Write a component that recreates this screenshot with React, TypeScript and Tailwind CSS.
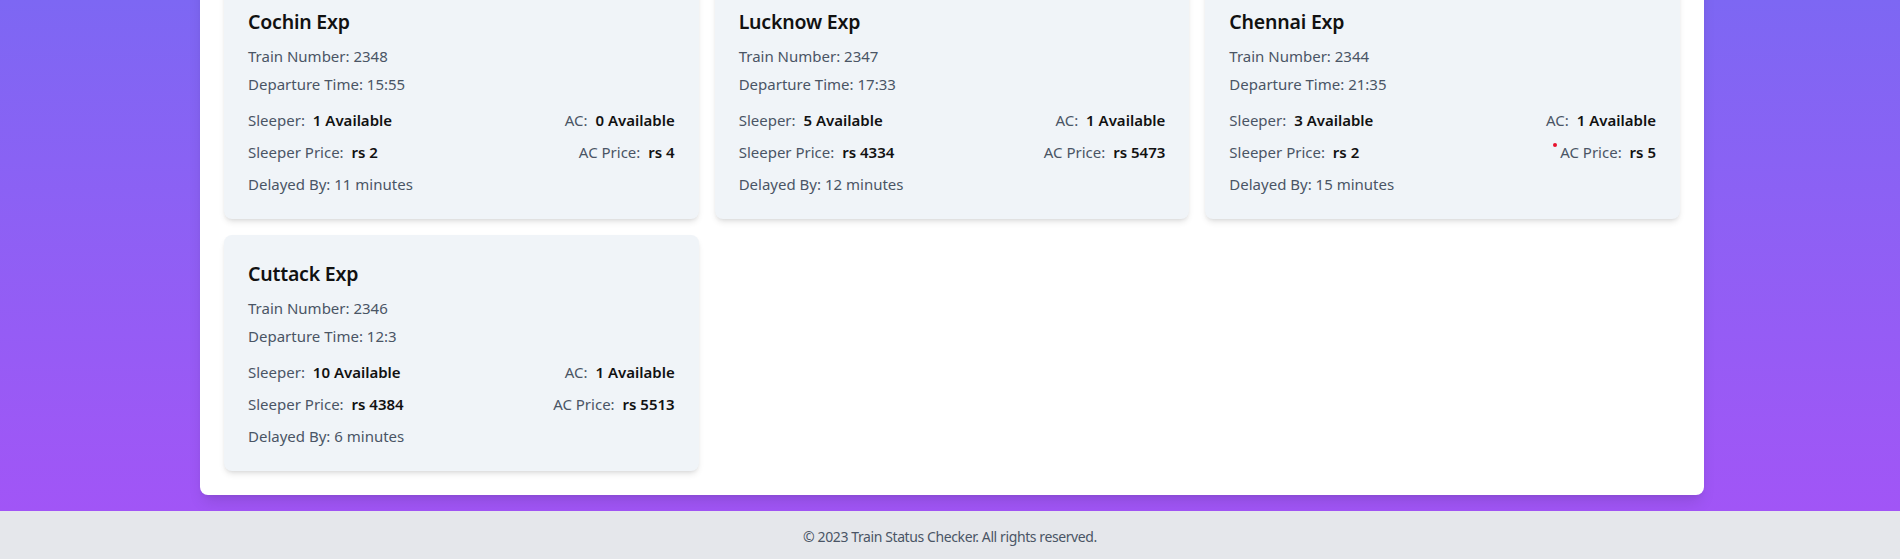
import React from 'react'

interface Train {
  name: string
  number: number
  departure: string
  sleeper: number
  ac: number
  sleeperPrice: number
  acPrice: number
  delay: number
  marker?: boolean
}

const TRAINS: Train[] = [
  { name: 'Cochin Exp', number: 2348, departure: '15:55', sleeper: 1, ac: 0, sleeperPrice: 2, acPrice: 4, delay: 11 },
  { name: 'Lucknow Exp', number: 2347, departure: '17:33', sleeper: 5, ac: 1, sleeperPrice: 4334, acPrice: 5473, delay: 12 },
  { name: 'Chennai Exp', number: 2344, departure: '21:35', sleeper: 3, ac: 1, sleeperPrice: 2, acPrice: 5, delay: 15, marker: true },
  { name: 'Cuttack Exp', number: 2346, departure: '12:3', sleeper: 10, ac: 1, sleeperPrice: 4384, acPrice: 5513, delay: 6 },
]

function TrainCard({ t }: { t: Train }) {
  return (
    <div className="bg-[#f0f4f8] rounded-lg shadow-md px-6 pt-[25px] pb-[23px] text-[15px]/6">
      <h2 className="text-[19.5px]/7 font-semibold text-[#111] tracking-[-0.2px] mb-2">{t.name}</h2>
      <p className="text-gray-600 mb-1">Train Number: {t.number}</p>
      <p className="text-gray-600 mb-3">Departure Time: {t.departure}</p>

      <div className="flex justify-between mb-2">
        <span className="text-gray-600">
          Sleeper: <span className="ml-1 font-semibold text-[#111]">{t.sleeper} Available</span>
        </span>
        <span className="text-gray-600">
          AC: <span className="ml-1 font-semibold text-[#111]">{t.ac} Available</span>
        </span>
      </div>

      <div className="flex justify-between mb-2">
        <span className="text-gray-600">
          Sleeper Price: <span className="ml-1 font-semibold text-[#111]">rs {t.sleeperPrice}</span>
        </span>
        <span className="relative text-gray-600">
          {t.marker && <span className="absolute -left-[7px] top-[3px] w-[4px] h-[4px] rounded-full bg-[#e8112d]" />}
          AC Price: <span className="ml-1 font-semibold text-[#111]">rs {t.acPrice}</span>
        </span>
      </div>

      <p className="text-gray-600">Delayed By: {t.delay} minutes</p>
    </div>
  )
}

export default function App() {
  return (
    <div className="min-h-screen flex flex-col font-['Noto_Sans',sans-serif]">
      {/* Fondo degradado */}
      <div className="flex flex-col bg-linear-to-b from-[#7d67f3] to-[#a155f6] pb-4">
        <div className="ml-[200px] w-[1504px] -mt-[41px] bg-white rounded-lg shadow-lg p-6">
          <div className="grid grid-cols-3 gap-4">
            {TRAINS.map(t => (
              <TrainCard key={t.number} t={t} />
            ))}
          </div>
        </div>
      </div>

      <footer className="bg-gray-200 py-4 text-center text-sm text-gray-600 tracking-[-0.4px]">
        © 2023 Train Status Checker. All rights reserved.
      </footer>
    </div>
  )
}
